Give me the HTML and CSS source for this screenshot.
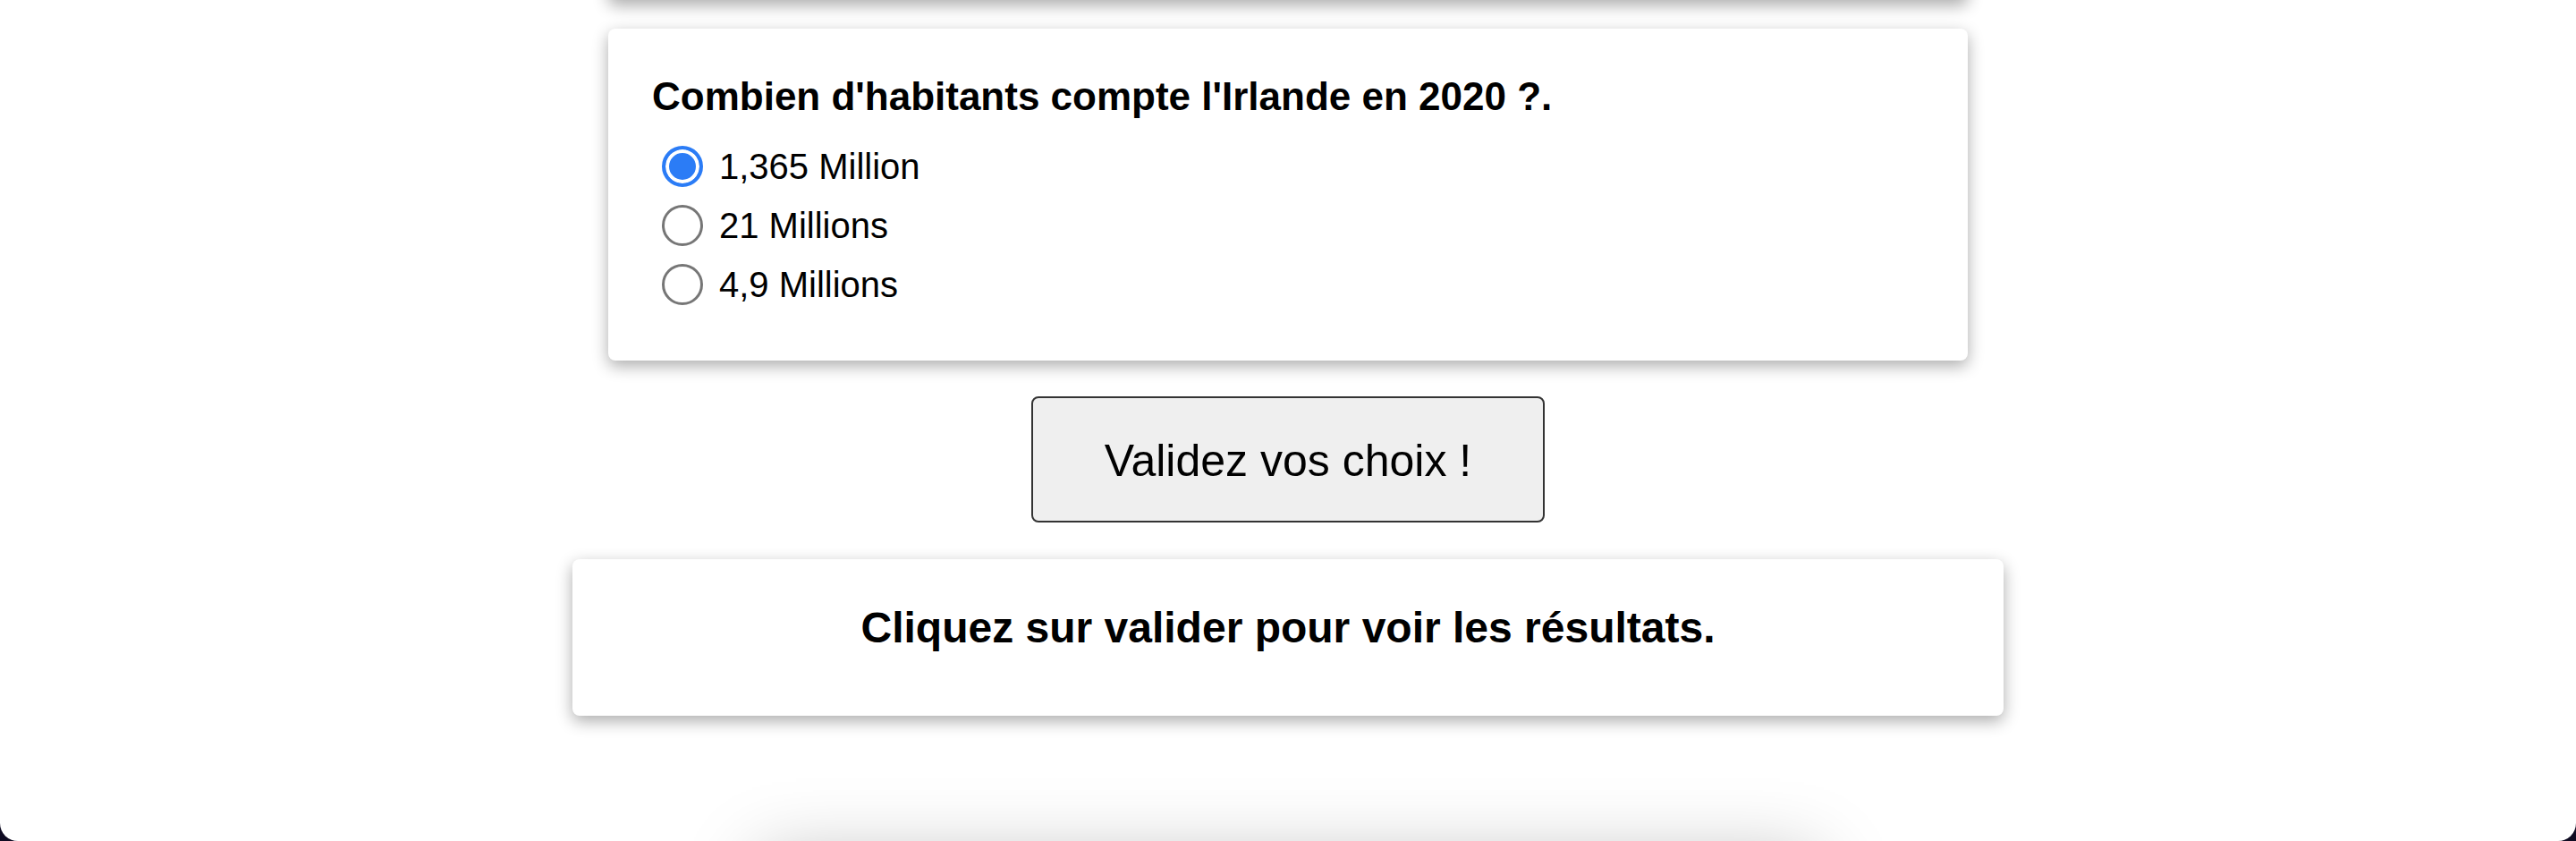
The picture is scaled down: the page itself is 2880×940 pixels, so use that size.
FILE: index.html
```html
<!DOCTYPE html>
<html lang="fr">
<head>
<meta charset="utf-8">
<title>Quiz</title>
<link rel="stylesheet" href="styles.css">
</head>
<body>
<div class="page">
  <div class="card card-prev"></div>
  <form class="card question">
    <h3 class="question-title">Combien d'habitants compte l'Irlande en 2020 ?.</h3>
    <label class="option"><input type="radio" name="q" checked><span>1,365 Million</span></label>
    <label class="option"><input type="radio" name="q"><span>21 Millions</span></label>
    <label class="option"><input type="radio" name="q"><span>4,9 Millions</span></label>
  </form>
  <button class="validate" type="button">Validez vos choix !</button>
  <div class="card result">
    <h2 class="result-text">Cliquez sur valider pour voir les résultats.</h2>
  </div>
  <div class="next-block"></div>
</div>
</body>
</html>
```
FILE: styles.css
```css
html, body {
  margin: 0;
  padding: 0;
  background: #0f0b22;
}
body {
  font-family: "Liberation Sans", Arial, sans-serif;
  color: #000;
}
.page {
  height: 940px;
  background: #fff;
  border-radius: 0 0 20px 20px;
  overflow: hidden;
  display: flex;
  flex-direction: column;
  align-items: center;
}
.card {
  background: #fff;
  border-radius: 8px;
  box-shadow: 0 6px 18px rgba(0, 0, 0, 0.33);
  box-sizing: border-box;
  flex-shrink: 0;
}
.card-prev {
  width: 1520px;
  height: 120px;
  margin-top: -120px;
}
.question {
  width: 1520px;
  margin: 32px 0 0;
  padding: 51px 50px 52px 49px;
}
.question-title {
  margin: 0 0 20px;
  font-size: 44px;
  font-weight: 700;
  line-height: normal;
}
.option {
  display: flex;
  align-items: center;
  gap: 18px;
  height: 66px;
  padding-left: 11px;
  font-size: 40px;
}
.option input {
  appearance: none;
  -webkit-appearance: none;
  width: 46px;
  height: 46px;
  margin: 0;
  border: 3px solid #767676;
  border-radius: 50%;
  box-sizing: border-box;
  background: #fff;
  flex-shrink: 0;
}
.option input:checked {
  border: 4px solid #2b7cf6;
  background: #2b7cf6;
  box-shadow: inset 0 0 0 4px #fff;
}
.validate {
  margin-top: 40px;
  flex-shrink: 0;
  font-family: "Liberation Sans", Arial, sans-serif;
  font-size: 50px;
  line-height: 57px;
  padding: 42px 80px 38px;
  border: 2px solid #333;
  border-radius: 8px;
  background: #efefef;
  color: #000;
}
.result {
  width: 1600px;
  margin-top: 41px;
  padding: 50px 40px 71px;
}
.result-text {
  margin: 0;
  font-size: 48px;
  font-weight: 700;
  line-height: 54px;
  text-align: center;
}
.next-block {
  width: 1180px;
  height: 300px;
  margin-top: 161px;
  flex-shrink: 0;
  background: #fff;
  box-shadow: 0 0 80px rgba(0, 0, 0, 0.28);
}
```
